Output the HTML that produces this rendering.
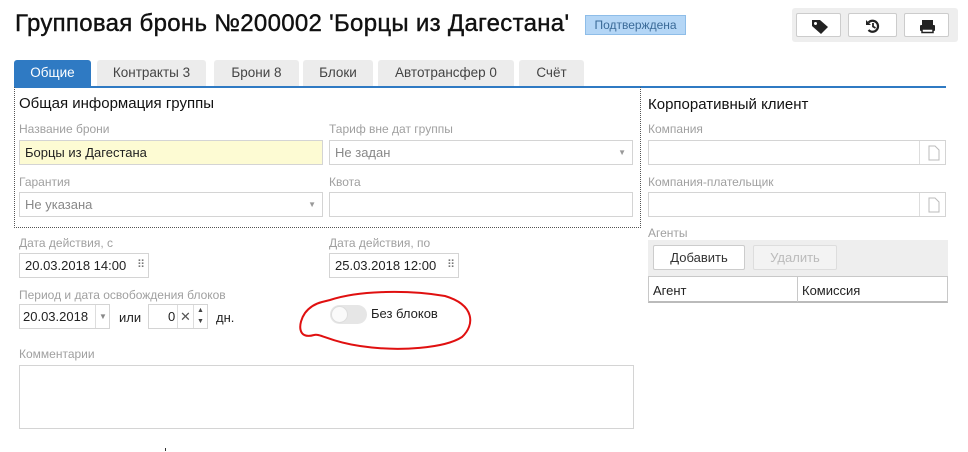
<!DOCTYPE html>
<html><head><meta charset="utf-8"><style>
*{box-sizing:border-box;margin:0;padding:0}
body{width:968px;height:452px;background:#fff;font-family:"Liberation Sans",sans-serif;font-size:13px;color:#222;position:relative;overflow:hidden}
.a{position:absolute}
.lbl{position:absolute;color:#a0a0a0;font-size:12px}
.inp{position:absolute;border:1px solid #d4d4d4;background:#fff;height:25px;line-height:23px;padding-left:5px;font-size:13px}
.tab{position:absolute;top:60px;height:26px;background:#ececec;border-radius:3px 3px 0 0;text-align:center;line-height:26px;color:#444;font-size:13.5px}
.btn{position:absolute;background:#fff;border:1px solid #ccc;border-radius:2px}
.arr{position:absolute;right:6px;top:0;color:#999;font-size:8px}
.cal{position:absolute;right:4px;top:0;color:#777;font-size:11px;letter-spacing:-1px}
</style></head><body>
<div class="a" style="left:15px;top:10px;font-size:24px;color:#111;letter-spacing:0.3px;-webkit-text-stroke:0.4px #111">Групповая бронь №200002 'Борцы из Дагестана'</div>
<div class="a" style="left:585px;top:15px;width:101px;height:20px;background:#b4d6f6;border:1px solid #8ebde8;color:#3a6a98;font-size:12px;line-height:18px;text-align:center">Подтверждена</div>
<div class="a" style="left:792px;top:8px;width:166px;height:34px;background:#eee;border-radius:3px"></div>
<div class="btn" style="left:796px;top:13px;width:45px;height:24px"><svg width="45" height="24"><path d="M15 6h8l8 7-7 7-9-8z" fill="#222"/><circle cx="18.5" cy="9.5" r="1.5" fill="#fff"/></svg></div>
<div class="btn" style="left:848px;top:13px;width:49px;height:24px"><svg width="49" height="24"><path d="M19.5 8.5a5.5 5.5 0 1 1 0 7.5" fill="none" stroke="#222" stroke-width="2.2"/><path d="M17 6v5h5z" fill="#222"/><path d="M24 9v3.5l2.5 1.5" stroke="#222" stroke-width="1.8" fill="none"/></svg></div>
<div class="btn" style="left:904px;top:13px;width:45px;height:24px"><svg width="45" height="24"><rect x="17" y="6" width="11" height="5" fill="#222"/><rect x="15" y="11" width="15" height="6" rx="1" fill="#222"/><rect x="17" y="15" width="11" height="3.5" fill="#fff" stroke="#222" stroke-width="1.5"/></svg></div>

<div class="tab" style="left:14px;width:77px;background:#2f7ac3;color:#fff">Общие</div>
<div class="tab" style="left:97px;width:109px">Контракты 3</div>
<div class="tab" style="left:214px;width:85px">Брони 8</div>
<div class="tab" style="left:303px;width:70px">Блоки</div>
<div class="tab" style="left:378px;width:136px">Автотрансфер 0</div>
<div class="tab" style="left:519px;width:65px">Счёт</div>
<div class="a" style="left:14px;top:86px;width:932px;height:2px;background:#2f7ac3"></div>
<div class="a" style="left:14px;top:87px;width:627px;height:141px;border:1px dotted #555;border-top:none"></div>

<div class="a" style="left:19px;top:95px;font-size:15px;color:#111">Общая информация группы</div>
<div class="lbl" style="left:19px;top:122px">Название брони</div>
<div class="inp" style="left:19px;top:140px;width:304px;background:#fdfbd3">Борцы из Дагестана</div>
<div class="lbl" style="left:329px;top:122px">Тариф вне дат группы</div>
<div class="inp" style="left:329px;top:140px;width:304px;color:#888">Не задан<span class="arr">▼</span></div>
<div class="lbl" style="left:19px;top:175px">Гарантия</div>
<div class="inp" style="left:19px;top:192px;width:304px;color:#888">Не указана<span class="arr">▼</span></div>
<div class="lbl" style="left:329px;top:175px">Квота</div>
<div class="inp" style="left:329px;top:192px;width:304px"></div>

<div class="lbl" style="left:19px;top:236px">Дата действия, с</div>
<div class="inp" style="left:19px;top:253px;width:130px">20.03.2018 14:00<span class="cal">⠿</span></div>
<div class="lbl" style="left:329px;top:236px">Дата действия, по</div>
<div class="inp" style="left:329px;top:253px;width:130px">25.03.2018 12:00<span class="cal">⠿</span></div>
<div class="lbl" style="left:19px;top:288px">Период и дата освобождения блоков</div>
<div class="inp" style="left:19px;top:304px;width:91px;padding-left:3px">20.03.2018<span class="a" style="left:75px;top:0;width:15px;height:23px;border-left:1px solid #ddd;color:#888;font-size:8px;text-align:center">▼</span></div>
<div class="a" style="left:119px;top:310px">или</div>
<div class="inp" style="left:148px;top:304px;width:60px;padding-left:19px">0<span class="a" style="left:28px;top:0;width:16px;height:23px;border-left:1px solid #ddd;text-align:center;color:#555">✕</span><span class="a" style="left:44px;top:0;width:14px;height:23px;border-left:1px solid #ddd;font-size:7px;line-height:11px;text-align:center;color:#444">▲<br>▼</span></div>
<div class="a" style="left:216px;top:310px">дн.</div>
<div class="a" style="left:330px;top:305px;width:37px;height:19px;background:#e6e6e6;border-radius:10px"><div class="a" style="left:1px;top:1px;width:17px;height:17px;border-radius:50%;background:#fafafa;border:1px solid #ddd"></div></div>
<div class="a" style="left:371px;top:306px;font-size:13px">Без блоков</div>
<svg class="a" style="left:0;top:0" width="968" height="452"><path d="M330 300C360 290 410 290 445 296C475 305 475 325 462 337C445 348 400 352 360 346C330 342 320 333 314 335C297 340 298 323 305 313C311 305 318 303 322 302Z" fill="none" stroke="#e01010" stroke-width="2"/></svg>
<div class="lbl" style="left:19px;top:347px">Комментарии</div>
<div class="inp" style="left:19px;top:365px;width:615px;height:64px"></div>
<div class="a" style="left:165px;top:448px;width:1px;height:3px;background:#333"></div>

<div class="a" style="left:648px;top:96px;font-size:15px;color:#111">Корпоративный клиент</div>
<div class="lbl" style="left:648px;top:122px">Компания</div>
<div class="inp" style="left:648px;top:140px;width:298px"><span class="a" style="left:270px;top:0;width:27px;height:23px;border-left:1px solid #ddd"><svg width="27" height="23"><path d="M9 5h6l4 4v10H9z" fill="none" stroke="#bbb"/></svg></span></div>
<div class="lbl" style="left:648px;top:175px">Компания-плательщик</div>
<div class="inp" style="left:648px;top:192px;width:298px"><span class="a" style="left:270px;top:0;width:27px;height:23px;border-left:1px solid #ddd"><svg width="27" height="23"><path d="M9 5h6l4 4v10H9z" fill="none" stroke="#bbb"/></svg></span></div>
<div class="lbl" style="left:648px;top:226px">Агенты</div>
<div class="a" style="left:648px;top:240px;width:300px;height:36px;background:#eee"></div>
<div class="btn" style="left:653px;top:245px;width:92px;height:25px;text-align:center;line-height:23px;color:#333">Добавить</div>
<div class="btn" style="left:753px;top:245px;width:84px;height:25px;text-align:center;line-height:23px;color:#bbb;background:#f3f3f3;border-color:#ddd">Удалить</div>
<div class="a" style="left:648px;top:276px;width:300px;height:27px;border:1px solid #c8c8c8;border-bottom:2px solid #bbb"><span class="a" style="left:4px;top:6px">Агент</span><span class="a" style="left:148px;top:0;height:25px;border-left:1px solid #c8c8c8"></span><span class="a" style="left:153px;top:6px">Комиссия</span></div>
</body></html>
